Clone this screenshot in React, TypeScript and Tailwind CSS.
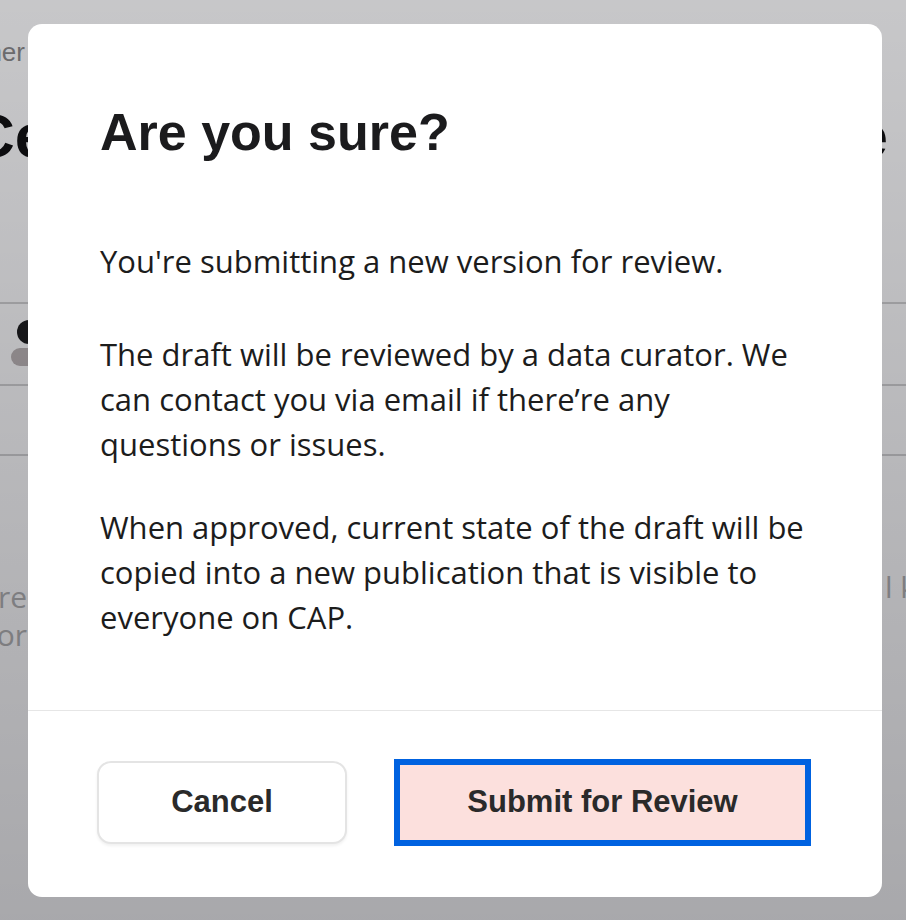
import React from "react"

const BackgroundPage = () => {
    return (
        <div className="w-full h-[920px] overflow-hidden bg-white flex flex-col font-['Liberation_Sans',Arial,sans-serif]">
            <div className="h-[32px]" />
            <div className="h-[40px] flex items-center">
                <div className="w-[25px] flex justify-end">
                    <span className="whitespace-nowrap text-[26px] text-[#8a8a8a]">Publisher</span>
                </div>
            </div>
            <div className="h-[80px] mt-[23px] flex items-center justify-between pr-[18px]">
                <span className="-ml-[30px] whitespace-nowrap text-[62px] font-bold text-[#111111]">Cell Atlas</span>
                <span className="whitespace-nowrap text-[62px] font-bold text-[#111111]">Type</span>
            </div>
            <div className="mt-[127px] border-t-2 border-[#d2d2d2]" />
            <div className="pl-[17px] pt-[16px] h-[80px]">
                <div className="w-[24px] h-[24px] rounded-full bg-[#1e1e1e]" />
                <div className="mt-[4px] -ml-[6px] w-[44px] h-[18px] rounded-full bg-[#bdb6b6]" />
            </div>
            <div className="border-t-2 border-[#d2d2d2]" />
            <div className="h-[68px]" />
            <div className="border-t-2 border-[#d2d2d2]" />
            <div className="mt-[112px] flex justify-between font-['Open_Sans',sans-serif] text-[30px] text-[#b3b3b3]">
                <div className="w-[27px] flex flex-col items-end mt-[10px] leading-[38px]">
                    <span className="whitespace-nowrap">more</span>
                    <span className="whitespace-nowrap">for</span>
                </div>
                <div className="w-[23px] overflow-hidden leading-[38px] pl-[2px]">
                    <span className="whitespace-nowrap">l kinds</span>
                </div>
            </div>
        </div>
    )
}

export default function App() {
    return (
        <div className="relative w-full h-[920px] overflow-hidden">
            <BackgroundPage />
            <div className="absolute inset-0 bg-linear-to-b from-[#00000a]/22 to-[#00000a]/34 flex items-start pt-[24px] pl-[28px]">
                <div className="w-[854px] h-[873px] bg-white rounded-[14px] flex flex-col">
                    <div className="px-[72px] pt-[77px]">
                        <h1 className="text-[52px] leading-[62px] font-bold text-[#1b1b1d] font-['Liberation_Sans',Arial,sans-serif]">Are you sure?</h1>
                        <div className="font-['Open_Sans',sans-serif] text-[31px] leading-[45px] text-[#1c1c1c]">
                            <p className="mt-[76px]">You're submitting a new version for review.</p>
                            <p className="mt-[48px]">The draft will be reviewed by a data curator. We can contact you via email if there’re any questions or issues.</p>
                            <p className="mt-[38px]">When approved, current state of the draft will be copied into a new publication that is visible to everyone on CAP.</p>
                        </div>
                    </div>
                    <div className="mt-[70px] border-t border-[#e6e6e6]" />
                    <div className="flex-1 flex items-center px-[69px] pb-[3px] gap-[47px] font-['Liberation_Sans',Arial,sans-serif]">
                        <button className="w-[250px] h-[83px] rounded-[14px] border-2 border-[#e4e4e4] bg-white shadow-[0_2px_3px_rgba(0,0,0,0.06)] text-[31px] font-bold text-[#2a2a2a]">
                            Cancel
                        </button>
                        <button className="w-[417px] h-[87px] border-[6px] border-[#0062e0] bg-[#fce0dd] text-[31px] font-bold text-[#2a2a2a]">
                            Submit for Review
                        </button>
                    </div>
                </div>
            </div>
        </div>
    )
}
